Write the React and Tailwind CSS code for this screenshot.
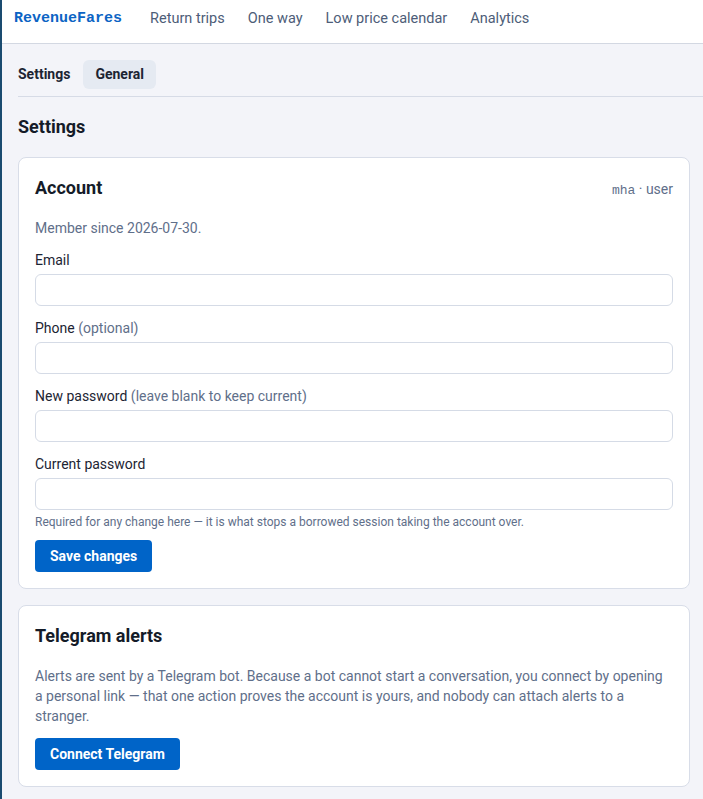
import React from 'react';

const sans = { fontFamily: 'Roboto, "Liberation Sans", sans-serif' };

const navLinks = ['Return trips', 'One way', 'Low price calendar', 'Analytics'];

const Field = ({ label, hint, type = 'text' }) => (
  <div className="mt-[12px]">
    <label className="block text-[14px] leading-[20px] text-[#1c2433]">
      {label}
      {hint && <span className="text-[#5f6f8a]"> {hint}</span>}
    </label>
    <input
      type={type}
      className="mt-[4px] block h-[32px] w-full rounded-[6px] border border-[#d5dbe6] bg-white px-2 text-sm outline-none"
    />
  </div>
);

const App = () => {
  return (
    <div className="min-h-[799px] border-l-2 border-[#1a4b70] bg-[#f3f4f9]" style={sans}>
      {/* Top nav */}
      <header className="flex h-[44px] items-start border-b border-[#d3d8e2] bg-white pl-[12px] pt-[9px]">
        <span className="font-['Liberation_Mono',monospace] text-[15px] font-bold leading-[20px] text-[#0c64c4]">RevenueFares</span>
        <nav className="ml-[28px] flex items-center gap-[23px]">
          {navLinks.map((l) => (
            <a key={l} className="text-[14.5px] leading-[20px] text-[#4d5d78]">{l}</a>
          ))}
        </nav>
      </header>

      {/* Tabs */}
      <div className="ml-[16px] flex h-[53px] items-center gap-[13px] border-b border-[#d6dbe6] pt-[8px]">
        <span className="text-[14px] font-bold text-[#1c2433]">Settings</span>
        <span className="rounded-[6px] bg-[#e5eaf2] px-[12px] py-[4px] text-[14px] font-bold text-[#1c2433]">General</span>
      </div>

      <main className="pl-[16px] pr-[13px]">
        <h1 className="mt-[17px] text-[18px] font-bold leading-[26px] text-[#141b28]">Settings</h1>

        {/* Account card */}
        <section className="mt-[17px] rounded-[8px] border border-[#d8dde8] bg-white px-[16px] pb-[16px] pt-[17px]">
          <div className="flex items-baseline justify-between">
            <h2 className="text-[18px] font-bold leading-[26px] text-[#141b28]">Account</h2>
            <span className="text-[14px] text-[#5f6f8a]">
              <span className="font-['Liberation_Mono',monospace] text-[13px]">mha</span> · user
            </span>
          </div>
          <p className="mt-[17px] text-[14px] leading-[20px] text-[#5f6f8a]">Member since 2026-07-30.</p>

          <Field label="Email" type="email" />
          <Field label="Phone" hint="(optional)" />
          <Field label="New password" hint="(leave blank to keep current)" type="password" />
          <Field label="Current password" type="password" />
          <p className="mt-[4px] text-[12px] leading-[16px] text-[#5f6f8a]">
            Required for any change here — it is what stops a borrowed session taking the account over.
          </p>
          <button className="mt-[10px] h-[32px] rounded-[4px] bg-[#0064c8] px-[15px] text-[14px] font-bold text-white">
            Save changes
          </button>
        </section>

        {/* Telegram card */}
        <section className="mt-[16px] rounded-[8px] border border-[#d8dde8] bg-white px-[16px] pb-[16px] pt-[17px]">
          <h2 className="text-[18px] font-bold leading-[26px] text-[#141b28]">Telegram alerts</h2>
          <p className="mt-[17px] text-[14px] leading-[20px] text-[#5f6f8a]">
            Alerts are sent by a Telegram bot. Because a bot cannot start a conversation, you connect by opening a
            personal link — that one action proves the account is yours, and nobody can attach alerts to a stranger.
          </p>
          <button className="mt-[12px] h-[32px] rounded-[4px] bg-[#0064c8] px-[15px] text-[14px] font-bold text-white">
            Connect Telegram
          </button>
        </section>
      </main>
    </div>
  );
};

export default App;
